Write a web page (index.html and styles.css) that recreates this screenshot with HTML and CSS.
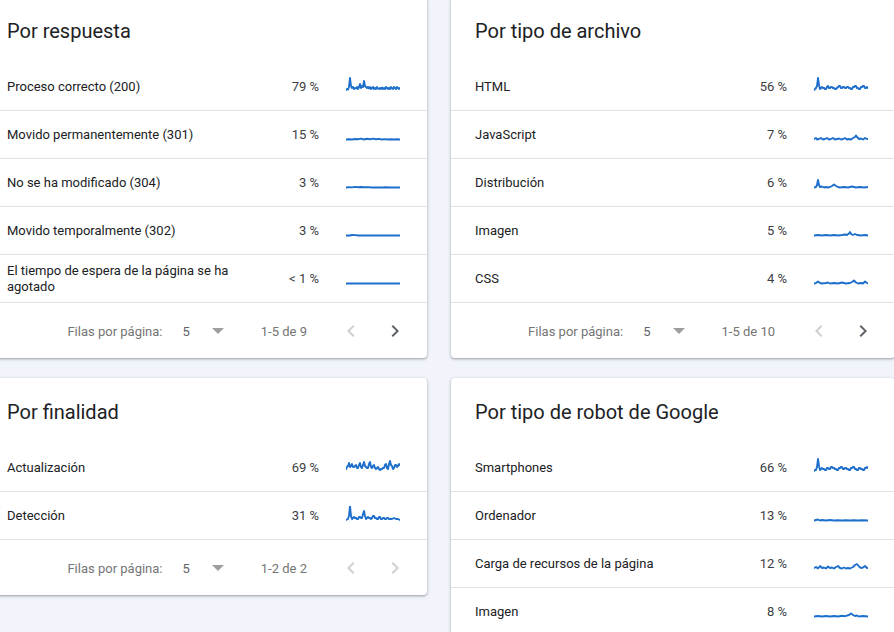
FILE: index.html
```html
<!DOCTYPE html>
<html lang="es">
<head>
<meta charset="utf-8">
<title>Estadísticas de rastreo</title>
<link rel="stylesheet" href="styles.css">
</head>
<body>
<div class="grid">
  <section class="card">
    <h2 class="card-title">Por respuesta</h2>
    <div class="row"><span class="name">Proceso correcto (200)</span><span class="pct">79 %</span>
      <svg class="spark" viewBox="0 0 54 20"><polyline points="0,13 1,12 2,12.5 3,10 4,1 5,9 6,11 7,10 8,12 9,11 10,11.5 11,10 12,12 13,10 14,7 15,11 16,9 17,10 18,4 19,9 20,10 21,11 22,10 23,11.5 24,10 25,12 26,11 27,10 28,12 29,11 30,12 31,10 32,11.5 33,12 34,11 35,12 36,10.5 37,12 38,11 39,12 40,10 41,11 42,12 43,11 44,12 45,10 46,11.5 47,12 48,10 49,11 50,12 51,10 52,11 53,12 54,11"/></svg></div>
    <div class="row"><span class="name">Movido permanentemente (301)</span><span class="pct">15 %</span>
      <svg class="spark" viewBox="0 0 54 20"><polyline points="0,14.5 3,14.2 6,14.5 9,14 12,14.3 15,13.6 18,14.5 21,13.8 24,14.3 27,13.6 30,14.3 33,13.9 36,14.5 39,14.1 42,14.5 45,14.2 48,14.5 51,14.3 54,14.5"/></svg></div>
    <div class="row"><span class="name">No se ha modificado (304)</span><span class="pct">3 %</span>
      <svg class="spark" viewBox="0 0 54 20"><polyline points="0,14.5 3,14.1 6,14.4 9,13.9 12,14.3 15,14 18,14.3 22,14.1 26,14.5 30,14.5 36,14.5 40,14.2 44,14.5 54,14.5"/></svg></div>
    <div class="row"><span class="name">Movido temporalmente (302)</span><span class="pct">3 %</span>
      <svg class="spark" viewBox="0 0 54 20"><polyline points="0,14.5 4,14.5 6,14 10,14.1 12,14.5 54,14.5"/></svg></div>
    <div class="row"><span class="name">El tiempo de espera de la página se ha agotado</span><span class="pct">&lt; 1 %</span>
      <svg class="spark" viewBox="0 0 54 20"><polyline points="0,14.5 54,14.5"/></svg></div>
    <div class="pager">
      <span class="label">Filas por página:</span>
      <span class="value">5</span>
      <svg class="drop" viewBox="0 0 12 6"><polygon points="0,0 12,0 6,6"/></svg>
      <span class="range">1-5 de 9</span>
      <svg class="nav off" viewBox="0 0 24 24"><path d="M15.41 7.41L14 6l-6 6 6 6 1.41-1.41L10.83 12z"/></svg>
      <svg class="nav on" viewBox="0 0 24 24"><path d="M10 6L8.59 7.41 13.17 12l-4.58 4.59L10 18l6-6z"/></svg>
    </div>
  </section>

  <section class="card">
    <h2 class="card-title">Por tipo de archivo</h2>
    <div class="row"><span class="name">HTML</span><span class="pct">56 %</span>
      <svg class="spark" viewBox="0 0 54 20"><polyline points="0,13 1,12 2,11 3,9 4,1 5,8 6,12 7,11 8,10 9,11 10,11 11,12 12,12 13,10 14,9 15,11 16,11 17,10 18,10 19,11 20,11 21,12 22,12 23,11 24,10 25,9 26,9 27,11 28,11 29,10 30,10 31,11 32,11 33,10 34,10 35,11 36,11 37,12 38,12 39,10 40,10 41,9 42,9 43,11 44,11 45,12 46,12 47,10 48,10 49,9 50,9 51,11 52,11 53,10 54,11"/></svg></div>
    <div class="row"><span class="name">JavaScript</span><span class="pct">7 %</span>
      <svg class="spark" viewBox="0 0 54 20"><polyline points="0,14 2,13 3,14.5 5,14 7,13 9,14.5 11,14 13,13 15,14.5 17,14 19,13 21,14.5 23,14 25,13.5 27,14.5 29,14 31,13 33,14.5 35,14 37,14.5 39,13 41,12 42,10.5 43,12 45,14 47,13.5 49,14.5 51,13 53,14 54,14"/></svg></div>
    <div class="row"><span class="name">Distribución</span><span class="pct">6 %</span>
      <svg class="spark" viewBox="0 0 54 20"><polyline points="0,14.5 2,14 3,12 4,7 5,12 6,14 8,13.5 10,14.5 12,14 14,14.5 16,14 18,13 20,11.5 22,13 24,14 26,14.5 30,14 34,14.5 38,13.5 42,14.5 46,14 50,14.5 54,14"/></svg></div>
    <div class="row"><span class="name">Imagen</span><span class="pct">5 %</span>
      <svg class="spark" viewBox="0 0 54 20"><polyline points="0,14.5 4,14 8,14.5 12,14 16,14.5 20,14 24,14.5 28,14 31,13.5 33,14 35,12.5 36,11 37,13 39,14 41,13 43,14 47,14.5 51,14 54,14.5"/></svg></div>
    <div class="row"><span class="name">CSS</span><span class="pct">4 %</span>
      <svg class="spark" viewBox="0 0 54 20"><polyline points="0,14.5 2,14 4,12.5 6,14 8,14.5 12,14 14,13.5 16,14.5 20,14 24,14.5 28,13.5 32,14.5 36,14 38,13 40,11.5 42,13.5 44,14.5 47,14 49,14.5 51,12.5 53,14 54,14.5"/></svg></div>
    <div class="pager">
      <span class="label">Filas por página:</span>
      <span class="value">5</span>
      <svg class="drop" viewBox="0 0 12 6"><polygon points="0,0 12,0 6,6"/></svg>
      <span class="range">1-5 de 10</span>
      <svg class="nav off" viewBox="0 0 24 24"><path d="M15.41 7.41L14 6l-6 6 6 6 1.41-1.41L10.83 12z"/></svg>
      <svg class="nav on" viewBox="0 0 24 24"><path d="M10 6L8.59 7.41 13.17 12l-4.58 4.59L10 18l6-6z"/></svg>
    </div>
  </section>

  <section class="card">
    <h2 class="card-title">Por finalidad</h2>
    <div class="row"><span class="name">Actualización</span><span class="pct">69 %</span>
      <svg class="spark" viewBox="0 0 54 20"><polyline points="0,11 1,9 2,8 3,5 4,9 5,8 6,6 7,9 8,9 9,8 10,7 11,10 12,10 13,7 14,5 15,9 16,10 17,7 18,4 19,8 20,9 21,10 22,10 23,6 24,4 25,9 26,10 27,8 28,7 29,10 30,11 31,10 32,9 33,11 34,12 35,11 36,11 37,10 38,10 39,7 40,6 41,10 42,11 43,6 44,3 45,7 46,8 47,11 48,10 49,7 50,7 51,9 52,8 53,6 54,7"/></svg></div>
    <div class="row"><span class="name">Detección</span><span class="pct">31 %</span>
      <svg class="spark" viewBox="0 0 54 20"><polyline points="0,14 2,13 3,10 4,0 5,10 6,13 7,12 8,11 9,12 10,12 11,13 12,13 13,11 14,11 15,12 16,12 17,8 18,5 19,10 20,13 21,12 22,11 23,12 24,12 25,13 26,12 27,10 28,10 29,12 30,12 31,13 32,13 33,11 34,11 35,13 36,13 37,12 38,12 39,13 40,13 41,12 42,12 43,13 44,13 46,13 48,12 50,13 52,13 54,14"/></svg></div>
    <div class="pager">
      <span class="label">Filas por página:</span>
      <span class="value">5</span>
      <svg class="drop" viewBox="0 0 12 6"><polygon points="0,0 12,0 6,6"/></svg>
      <span class="range">1-2 de 2</span>
      <svg class="nav off" viewBox="0 0 24 24"><path d="M15.41 7.41L14 6l-6 6 6 6 1.41-1.41L10.83 12z"/></svg>
      <svg class="nav off" viewBox="0 0 24 24"><path d="M10 6L8.59 7.41 13.17 12l-4.58 4.59L10 18l6-6z"/></svg>
    </div>
  </section>

  <section class="card">
    <h2 class="card-title">Por tipo de robot de Google</h2>
    <div class="row"><span class="name">Smartphones</span><span class="pct">66 %</span>
      <svg class="spark" viewBox="0 0 54 20"><polyline points="0,13 1,12 2,12 3,9 4,1 5,8 6,12 7,11 8,10 9,11 10,11 11,12 12,12 13,10 14,10 15,11 16,11 17,9 18,9 19,10 20,10 21,11 22,11 23,12 24,12 25,10 26,10 27,9 28,9 29,11 30,11 31,10 32,10 33,11 34,11 35,12 36,12 37,10 38,10 39,9 40,9 41,11 42,11 43,12 44,12 45,10 46,10 47,11 48,11 49,12 50,12 51,10 52,10 53,9 54,10"/></svg></div>
    <div class="row"><span class="name">Ordenador</span><span class="pct">13 %</span>
      <svg class="spark" viewBox="0 0 54 20"><polyline points="0,14.5 2,14 4,13.5 6,14.5 8,14 12,14.5 16,14 20,14.5 24,14.2 28,14.5 32,14.2 36,14.5 40,14.3 44,14.5 48,14.2 54,14.5"/></svg></div>
    <div class="row"><span class="name">Carga de recursos de la página</span><span class="pct">12 %</span>
      <svg class="spark" viewBox="0 0 54 20"><polyline points="0,14 2,13 4,14.5 6,12 8,14 10,13.5 12,14.5 14,12.5 16,14 18,13.5 20,14.5 22,13 24,12 26,14 28,14.5 30,13.5 32,14.5 34,14 36,14.5 39,13 41,11 43,10 45,12.5 47,14 49,13.5 51,12 53,14 54,14"/></svg></div>
    <div class="row"><span class="name">Imagen</span><span class="pct">8 %</span>
      <svg class="spark" viewBox="0 0 54 20"><polyline points="0,14.5 4,14 8,14.5 12,14 16,14.5 20,14 24,14.5 28,13.8 31,14.2 35,13 37,11.5 39,13 41,14 43,13.5 45,14.5 49,14 54,14.5"/></svg></div>
  </section>
</div>
</body>
</html>
```

FILE: styles.css
```css
html, body {
  margin: 0;
  padding: 0;
  background: #f1f4fb;
  overflow: hidden;
}

body {
  font-family: Roboto, "Noto Sans", Arial, sans-serif;
  color: #202124;
}

.grid {
  display: grid;
  grid-template-columns: 444px 444px;
  column-gap: 24px;
  row-gap: 20px;
  align-items: start;
  margin: -3px 0 0 -17px;
}

.card {
  background: #ffffff;
  border-radius: 4px;
  box-shadow: 0 1px 2px rgba(60, 64, 67, 0.3), 0 1px 3px 1px rgba(60, 64, 67, 0.15);
}

.card-title {
  margin: 0 0 18px;
  padding: 20px 24px 0;
  font-size: 20px;
  line-height: 28px;
  font-weight: 400;
  color: #202124;
}

.row {
  display: flex;
  align-items: center;
  height: 47px;
  padding: 0 24px;
  border-bottom: 1px solid #e3e3e3;
  font-size: 13px;
  line-height: 16px;
}

.name {
  flex: 1;
  color: #202124;
}

.pct {
  width: 56px;
  text-align: right;
  color: #3c4043;
}

.spark {
  width: 54px;
  height: 20px;
  margin: 0 3px 0 27px;
  flex: none;
}

.spark polyline {
  fill: none;
  stroke: #1e6fcc;
  stroke-width: 1.9;
  stroke-linejoin: round;
  stroke-linecap: round;
}

.pager {
  display: flex;
  align-items: center;
  justify-content: flex-end;
  height: 54px;
  padding: 1px 20px 0 0;
  font-size: 13px;
  color: #757575;
}

.label {
  margin-right: 20px;
}

.value {
  margin-right: 22px;
  color: #5f6368;
}

.drop {
  width: 12px;
  height: 6px;
  margin-right: 37px;
  fill: #9e9e9e;
}

.range {
  margin-right: 32px;
}

.nav {
  width: 24px;
  height: 24px;
}

.nav + .nav {
  margin-left: 20px;
}

.nav.off {
  fill: #cfcfcf;
}

.nav.on {
  fill: #5f6368;
}
```
